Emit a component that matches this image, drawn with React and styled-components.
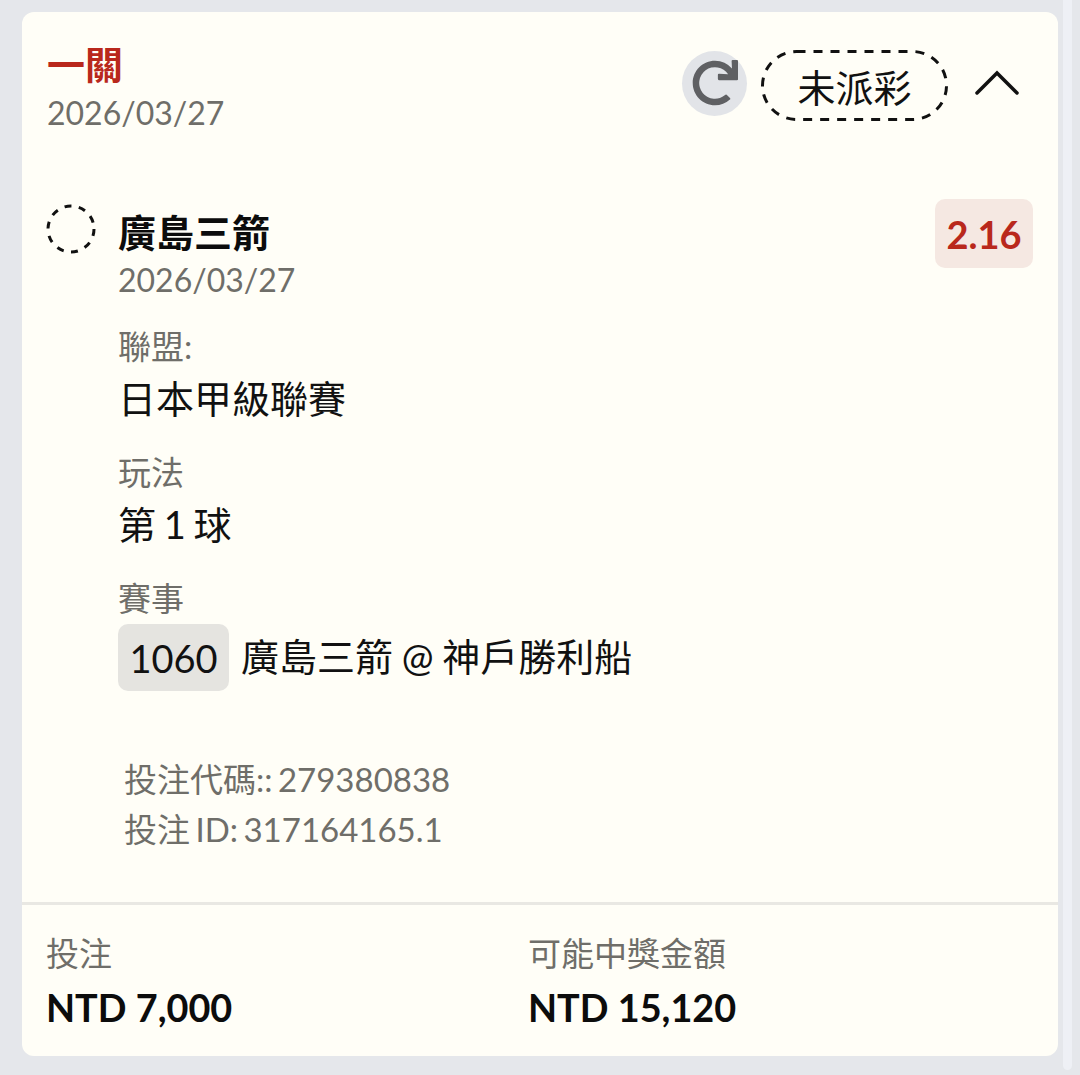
import React from 'react';
import styled, { createGlobalStyle } from 'styled-components';
import { FaRedo } from 'react-icons/fa';

const GlobalStyle = createGlobalStyle`
    html, body {
        margin: 0;
        padding: 0;
        background-color: #e5e7eb;
    }
    body {
        font-family: Lato, "Noto Sans CJK TC", sans-serif;
    }
`;

const Page = styled.div`
    position: relative;
    width: 1080px;
    height: 1075px;
    overflow: hidden;
    padding: 12px 22px 19px;
    box-sizing: border-box;
`;

const ScrollStrip = styled.div`
    position: absolute;
    top: 0;
    left: 1063px;
    width: 9px;
    height: 1070px;
    background-color: #eef0f5;
    border-radius: 0 0 5px 5px;
`;

const Card = styled.div`
    display: flex;
    flex-direction: column;
    height: 100%;
    background-color: #fffef7;
    border-radius: 12px;
`;

const Header = styled.div`
    display: flex;
    justify-content: space-between;
    align-items: flex-start;
    padding: 27px 38px 0 25px;
`;

const HeaderTitle = styled.div`
    display: flex;
    flex-direction: column;
`;

const BetType = styled.div`
    font-size: 38px;
    line-height: 51px;
    font-weight: 700;
    color: #b9281c;
`;

const DateText = styled.div`
    font-size: 32px;
    line-height: 46px;
    color: #6f6e69;
`;

const HeaderActions = styled.div`
    display: flex;
    align-items: center;
    gap: 14px;
    margin-top: 11px;
`;

const RefreshButton = styled.div`
    display: flex;
    justify-content: center;
    align-items: center;
    width: 65px;
    height: 65px;
    margin-bottom: 5px;
    border-radius: 50%;
    background-color: #e2e4e8;
    color: #5f6063;
`;

const StatusPill = styled.div`
    position: relative;
    display: flex;
    justify-content: center;
    align-items: center;
    width: 187px;
    height: 71px;
    font-size: 38px;
    color: #111;
`;

const PillOutline = styled.svg`
    position: absolute;
    top: 0;
    left: 0;
    width: 100%;
    height: 100%;
`;

const Chevron = styled.svg`
    width: 46px;
    height: 30px;
    margin-left: 12px;
    margin-bottom: 6px;
`;

const Selection = styled.div`
    display: grid;
    grid-template-columns: 50px 1fr auto;
    column-gap: 22px;
    padding: 63px 25px 0 24px;
`;

const StatusDot = styled.svg`
    width: 50px;
    height: 50px;
    margin-top: 5px;
`;

const SelectionBody = styled.div`
    display: flex;
    flex-direction: column;
    padding-top: 8px;
`;

const TeamName = styled.div`
    font-size: 38px;
    line-height: 50px;
    font-weight: 700;
    color: #0c0c0c;
`;

const Field = styled.div`
    display: flex;
    flex-direction: column;
    margin-top: ${(props) => props.$top || 22}px;
`;

const FieldLabel = styled.div`
    font-size: 33px;
    line-height: 48px;
    color: #6f6e69;
`;

const FieldValue = styled.div`
    display: flex;
    align-items: center;
    gap: 12px;
    font-size: 38px;
    line-height: 56px;
    word-spacing: -2px;
    color: #111;
`;

const GameRow = styled(FieldValue)`
    margin-top: 2px;
    word-spacing: -1px;
`;

const GameCode = styled.span`
    display: flex;
    align-items: center;
    justify-content: center;
    width: 111px;
    height: 67px;
    border-radius: 10px;
    background-color: #e5e4e0;
`;

const GameName = styled.span`
    margin-bottom: 3px;
`;

const Odds = styled.div`
    display: flex;
    align-items: center;
    justify-content: center;
    width: 98px;
    height: 69px;
    border-radius: 10px;
    background-color: #f5e8e2;
    color: #b9281c;
    font-size: 38px;
    font-weight: 700;
`;

const BetMeta = styled.div`
    display: flex;
    flex-direction: column;
    padding: 63px 0 0 102px;
    font-size: 33px;
    line-height: 50px;
    word-spacing: -3px;
    color: #6f6e69;
`;

const Footer = styled.div`
    display: grid;
    grid-template-columns: 482px 1fr;
    margin-top: auto;
    padding: 24px 24px 17px 24px;
    border-top: 3px solid #e9e8e3;
`;

const FooterCell = styled.div`
    display: flex;
    flex-direction: column;
`;

const Amount = styled.div`
    font-size: 37.8px;
    line-height: 62px;
    font-weight: 700;
    color: #0c0c0c;
`;

export default function App() {
    return (
        <Page>
            <GlobalStyle />
            <ScrollStrip />
            <Card>
                <Header>
                    <HeaderTitle>
                        <BetType>一關</BetType>
                        <DateText>2026/03/27</DateText>
                    </HeaderTitle>
                    <HeaderActions>
                        <RefreshButton>
                            <FaRedo size={46} />
                        </RefreshButton>
                        <StatusPill>
                            <PillOutline viewBox="0 0 187 71">
                                <rect x="1.5" y="1.5" width="184" height="68" rx="34" fill="none" stroke="#111" strokeWidth="3" strokeDasharray="9 8" />
                            </PillOutline>
                            未派彩
                        </StatusPill>
                        <Chevron viewBox="0 0 46 30">
                            <path d="M3 25 L23 5 L43 25" fill="none" stroke="#111" strokeWidth="3.5" strokeLinecap="round" />
                        </Chevron>
                    </HeaderActions>
                </Header>

                <Selection>
                    <StatusDot viewBox="0 0 50 50">
                        <circle cx="25" cy="25" r="23" fill="none" stroke="#111" strokeWidth="3" strokeDasharray="7 7.45" />
                    </StatusDot>
                    <SelectionBody>
                        <TeamName>廣島三箭</TeamName>
                        <DateText>2026/03/27</DateText>
                        <Field $top={19}>
                            <FieldLabel>聯盟:</FieldLabel>
                            <FieldValue>日本甲級聯賽</FieldValue>
                        </Field>
                        <Field>
                            <FieldLabel>玩法</FieldLabel>
                            <FieldValue>第 1 球</FieldValue>
                        </Field>
                        <Field>
                            <FieldLabel>賽事</FieldLabel>
                            <GameRow>
                                <GameCode>1060</GameCode>
                                <GameName>廣島三箭 @ 神戶勝利船</GameName>
                            </GameRow>
                        </Field>
                    </SelectionBody>
                    <Odds>2.16</Odds>
                </Selection>

                <BetMeta>
                    <div>投注代碼:: 279380838</div>
                    <div>投注 ID: 317164165.1</div>
                </BetMeta>

                <Footer>
                    <FooterCell>
                        <FieldLabel>投注</FieldLabel>
                        <Amount>NTD 7,000</Amount>
                    </FooterCell>
                    <FooterCell>
                        <FieldLabel>可能中獎金額</FieldLabel>
                        <Amount>NTD 15,120</Amount>
                    </FooterCell>
                </Footer>
            </Card>
        </Page>
    );
}
